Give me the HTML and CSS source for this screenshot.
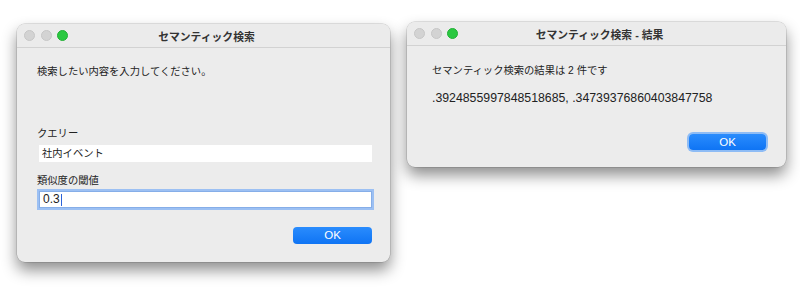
FILE: index.html
```html
<!DOCTYPE html>
<html lang="ja">
<head>
  <meta charset="UTF-8">
  <title>セマンティック検索</title>
  <link rel="stylesheet" href="styles.css">
</head>
<body>
  <div class="desktop">
    <!-- 入力ダイアログ -->
    <section class="window window-input">
      <div class="titlebar">
        <div class="lights">
          <span class="light"></span>
          <span class="light"></span>
          <span class="light green"></span>
        </div>
        <div class="title">セマンティック検索</div>
      </div>
      <div class="body">
        <p class="prompt">検索したい内容を入力してください。</p>
        <label class="label label-first">クエリー</label>
        <div class="field">社内イベント</div>
        <label class="label label-second">類似度の閾値</label>
        <div class="field field-focus">0.3<span class="caret"></span></div>
        <div class="actions">
          <button class="btn-ok">OK</button>
        </div>
      </div>
    </section>

    <!-- 結果ダイアログ -->
    <section class="window window-result">
      <div class="titlebar">
        <div class="lights">
          <span class="light"></span>
          <span class="light"></span>
          <span class="light green"></span>
        </div>
        <div class="title">セマンティック検索 - 結果</div>
      </div>
      <div class="body">
        <p class="prompt">セマンティック検索の結果は 2 件です</p>
        <p class="scores">.3924855997848518685, .34739376860403847758</p>
        <div class="actions actions-result">
          <button class="btn-ok btn-focus">OK</button>
        </div>
      </div>
    </section>
  </div>
</body>
</html>
```

FILE: styles.css
```css
* {
  box-sizing: border-box;
}

body {
  margin: 0;
  padding: 0;
  background: #fff;
  font-family: "Liberation Sans", "Noto Sans CJK JP", sans-serif;
  color: #222;
}

.desktop {
  display: flex;
  align-items: flex-start;
  gap: 17px;
  min-height: 289px;
  padding: 22px 0 0 17px;
}

.window {
  background: #ececec;
  border-radius: 8px;
  overflow: hidden;
  box-shadow: 0 0 0 0.5px rgba(0, 0, 0, 0.2), 0 8px 15px rgba(0, 0, 0, 0.45);
}

.window-input {
  width: 373px;
  height: 238px;
  margin-top: 2px;
}

.window-result {
  width: 379px;
  height: 145px;
}

.titlebar {
  position: relative;
  height: 24px;
  background: #ebebeb;
  border-bottom: 1px solid #d2d2d2;
  display: flex;
  align-items: center;
  justify-content: center;
}

.lights {
  position: absolute;
  left: 7px;
  top: 6px;
  display: flex;
  gap: 5.5px;
}

.light {
  width: 11px;
  height: 11px;
  border-radius: 50%;
  background: #d3d3d3;
  border: 0.5px solid #c6c6c6;
}

.light.green {
  background: #2ac840;
  border-color: #22b036;
}

.title {
  font-size: 10.8px;
  font-weight: bold;
  color: #333;
  padding-left: 6px;
}

.body {
  padding: 17px 18px 17px 20px;
}

.window-result .body {
  padding: 18px 18px 17px 25px;
}

.prompt {
  margin: 0;
  font-size: 10.3px;
  line-height: 14px;
}

.label {
  display: block;
  font-size: 10.3px;
  line-height: 14px;
}

.label-first {
  margin-top: 48px;
}

.label-second {
  margin-top: 12px;
}

.field {
  margin: 4px 0 0 2px;
  height: 17px;
  background: #fff;
  font-size: 10.3px;
  line-height: 17px;
  padding-left: 3px;
  display: flex;
  align-items: center;
}

.field-focus {
  margin-top: 3px;
  font-size: 12px;
  border: 1px solid #86aee8;
  box-shadow: 0 0 0 2px #9cc0f3;
}

.caret {
  display: inline-block;
  width: 1.5px;
  height: 12px;
  margin-left: 1px;
  background: #2a62d8;
}

.scores {
  margin: 12px 0 0;
  font-size: 12.3px;
  line-height: 16px;
  color: #222;
}

.actions {
  display: flex;
  justify-content: flex-end;
  margin-top: 19px;
}

.actions-result {
  margin-top: 28px;
}

.btn-ok {
  width: 79px;
  height: 17px;
  padding: 0;
  border: none;
  border-radius: 4px;
  background: linear-gradient(#2a8cfd, #0f74f4);
  color: #fff;
  font-family: "Liberation Sans", sans-serif;
  font-size: 11.5px;
  line-height: 17px;
  cursor: pointer;
}

.btn-focus {
  width: 77px;
  height: 16px;
  line-height: 16px;
  margin-right: 2px;
  box-shadow: 0 0 0 2px #8ebcf5;
}
```
